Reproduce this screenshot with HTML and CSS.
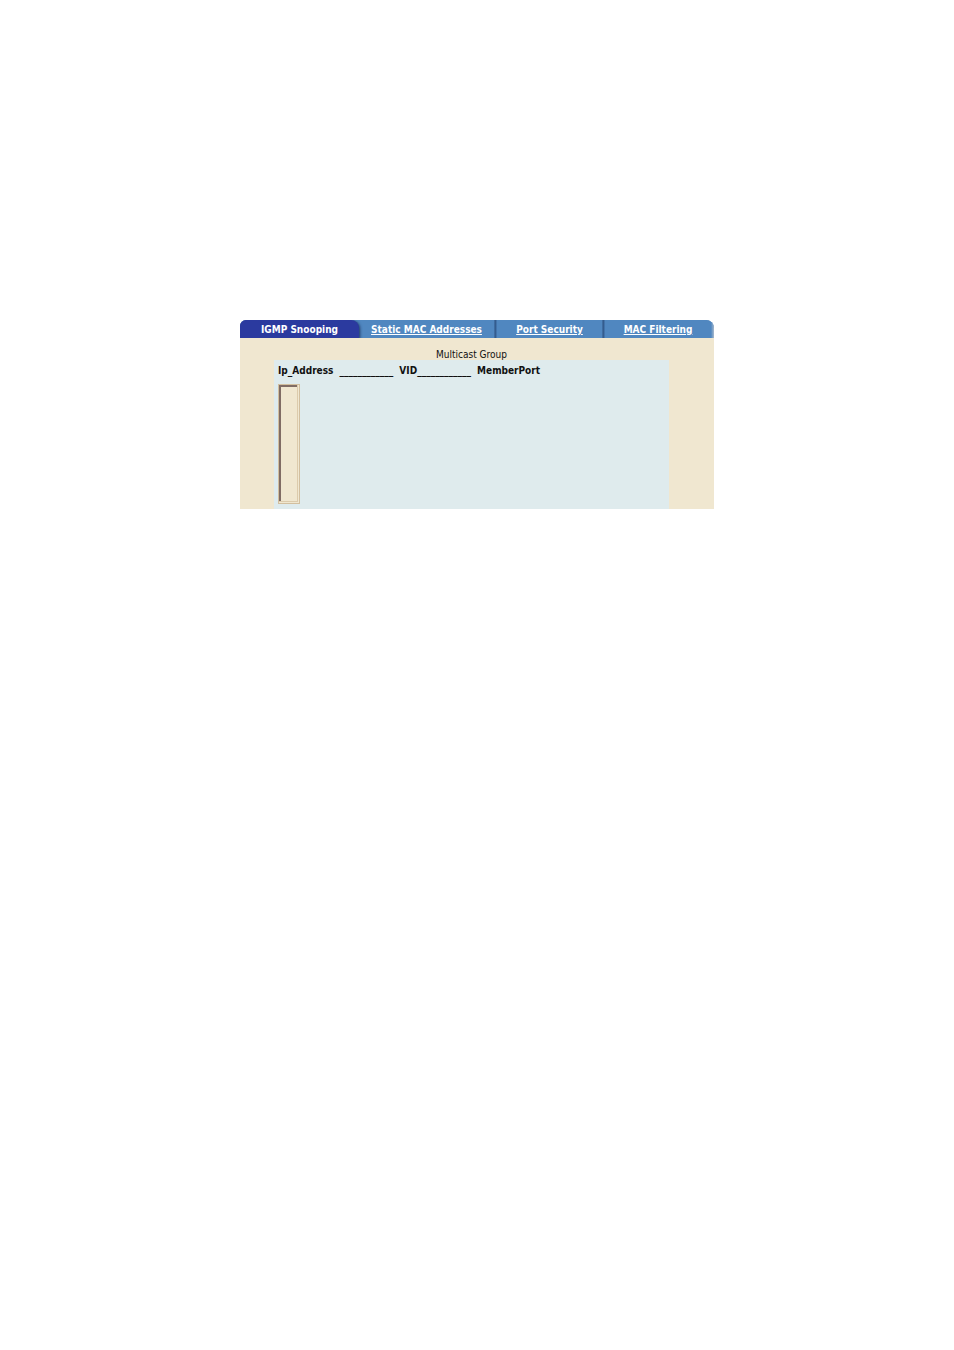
FILE: index.html
```html
<!DOCTYPE html>
<html lang="en">
<head>
    <meta charset="UTF-8">
    <title>IGMP Snooping</title>
    <link rel="stylesheet" href="styles.css">
</head>
<body>
    <div class="page">
        <nav class="tabs">
            <span class="tab active">IGMP Snooping</span>
            <a class="tab" href="#static">Static MAC Addresses</a>
            <a class="tab" href="#security">Port Security</a>
            <a class="tab" href="#filtering">MAC Filtering</a>
        </nav>
        <main class="content">
            <h1>Multicast Group</h1>
            <div class="panel">
                <label for="groups">
                    <span>Ip_Address</span>
                    <span>____________</span>
                    <span>VID____________</span>
                    <span>MemberPort</span>
                </label>
                <select id="groups" class="groups" size="8"></select>
            </div>
        </main>
    </div>
</body>
</html>
```

FILE: styles.css
```css
body {
    margin: 0;
    background-color: #fff;
    font-family: "DejaVu Sans Condensed", "DejaVu Sans", Verdana, sans-serif;
    font-size: 10px;
    line-height: 14px;
    color: #111;
}
.page {
    max-width: 474px;
    margin: 320px auto 0;
}
.tabs {
    display: grid;
    grid-template-columns: 119fr 138fr 108fr 109fr;
    background-color: #5087c0;
    border-radius: 6px 8px 0 0;
    overflow: hidden;
}
.tab {
    height: 18px;
    padding: 1px 3px 0 0;
    box-sizing: border-box;
    line-height: 18px;
    text-align: center;
    font-weight: bold;
    color: #fff;
    background: linear-gradient(to left, #4a7fb8, #2c5080 2px, #5087c0 3px);
}
/* the current tab drops its shadow on the next one */
.tab.active {
    z-index: 1;
    padding-right: 0;
    background: #2b3a9f;
    border-radius: 0 8px 0 0;
    box-shadow: 1px 1px 3px #1c3560;
}
.tab:last-child {
    background: linear-gradient(to left, #a9b9cb, #5087c0 3px);
}
.content {
    padding: 10px 45px 0 34px;
    background-color: #f0e7d0;
}
h1 {
    margin: 0;
    padding-top: 1px;
    font-size: 10px;
    line-height: 11px;
    font-weight: normal;
    text-align: center;
}
.panel {
    padding: 4px 4px 5px;
    background-color: #dfebed;
}
.panel label {
    display: flex;
    gap: 6px;
    font-weight: bold;
}
.groups {
    display: block;
    width: 22px;
    height: 120px;
    margin-top: 6px;
    padding: 0;
    border: 1px solid #d2bf9f;
    border-radius: 0;
    background-color: #f0e7d0;
    box-shadow: inset -1px -1px #f0e7d0, inset -2px -2px #dccbac, inset 2px 2px #806c64;
}
```
